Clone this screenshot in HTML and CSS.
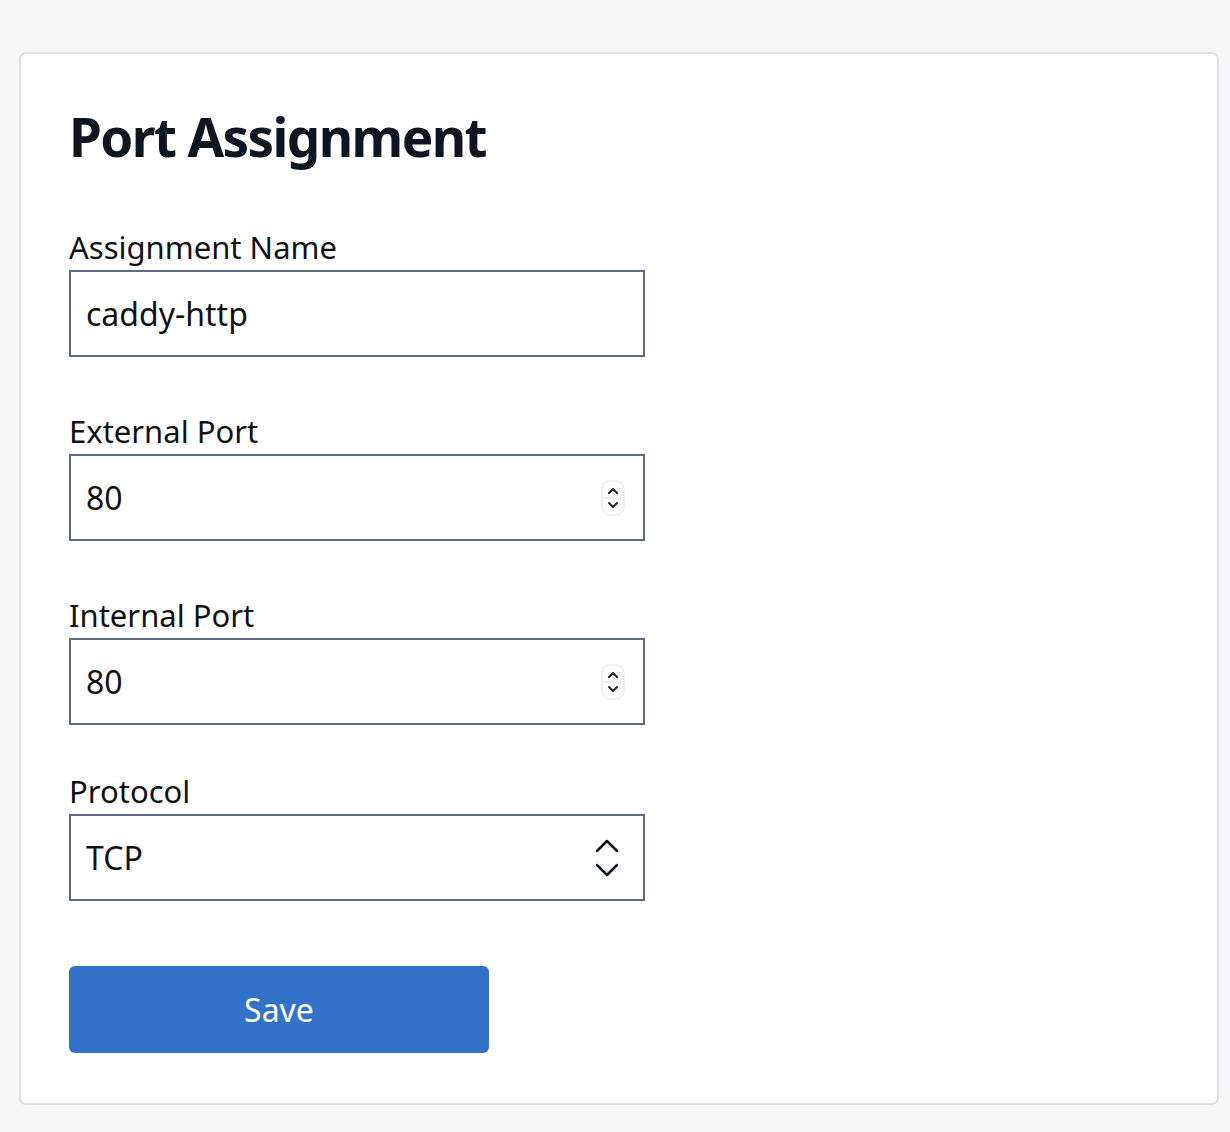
FILE: index.html
```html
<!DOCTYPE html>
<html lang="en">
<head>
  <meta charset="UTF-8">
  <meta name="viewport" content="width=device-width, initial-scale=1.0">
  <title>Port Assignment</title>
  <link rel="stylesheet" href="styles.css">
</head>
<body>
  <div class="card">
    <h1>Port Assignment</h1>
    <form id="portForm">
      <div class="field">
        <label for="assignName">Assignment Name</label>
        <div class="box">
          <input type="text" id="assignName" value="caddy-http">
        </div>
      </div>

      <div class="field">
        <label for="extPort">External Port</label>
        <div class="box">
          <input type="text" id="extPort" value="80" inputmode="numeric">
          <span class="spinner">
            <svg viewBox="0 0 24 36" width="24" height="36">
              <rect x="1" y="1" width="22" height="34" rx="8" fill="#fff" stroke="#e2e2e2"/>
              <line x1="1" y1="18" x2="23" y2="18" stroke="#e2e2e2"/>
              <path d="M8 13 L12 9 L16 13" fill="none" stroke="#222" stroke-width="2" stroke-linecap="round" stroke-linejoin="round"/>
              <path d="M8 23 L12 27 L16 23" fill="none" stroke="#222" stroke-width="2" stroke-linecap="round" stroke-linejoin="round"/>
            </svg>
          </span>
        </div>
      </div>

      <div class="field">
        <label for="intPort">Internal Port</label>
        <div class="box">
          <input type="text" id="intPort" value="80" inputmode="numeric">
          <span class="spinner">
            <svg viewBox="0 0 24 36" width="24" height="36">
              <rect x="1" y="1" width="22" height="34" rx="8" fill="#fff" stroke="#e2e2e2"/>
              <line x1="1" y1="18" x2="23" y2="18" stroke="#e2e2e2"/>
              <path d="M8 13 L12 9 L16 13" fill="none" stroke="#222" stroke-width="2" stroke-linecap="round" stroke-linejoin="round"/>
              <path d="M8 23 L12 27 L16 23" fill="none" stroke="#222" stroke-width="2" stroke-linecap="round" stroke-linejoin="round"/>
            </svg>
          </span>
        </div>
      </div>

      <div class="field field-select">
        <label for="protocol">Protocol</label>
        <div class="box">
          <span class="select-value" id="protocol">TCP</span>
          <span class="chevrons">
            <svg viewBox="0 0 24 40" width="24" height="40">
              <path d="M2 13 L12 3 L22 13" fill="none" stroke="#0d1520" stroke-width="2.5" stroke-linecap="round" stroke-linejoin="round"/>
              <path d="M2 27 L12 37 L22 27" fill="none" stroke="#0d1520" stroke-width="2.5" stroke-linecap="round" stroke-linejoin="round"/>
            </svg>
          </span>
        </div>
      </div>

      <button type="button" class="save">Save</button>
    </form>
  </div>
</body>
</html>
```

FILE: styles.css
```css
body { margin: 0; padding: 52px 11px 28px 19px; background: #f7f7f7; font-family: "Noto Sans", sans-serif; color: #111; }
.card { background: #fff; border: 2px solid #dfe1e8; border-radius: 7px; padding: 48px 48px 50px; }
h1 { margin: 0 0 55px; font-size: 53px; font-weight: 700; letter-spacing: -1.6px; color: #0b1620; line-height: 70px; }
.field { margin-bottom: 54px; }
.field label { display: block; font-size: 31px; line-height: 40px; margin-bottom: 3px; }
.box { display: flex; align-items: center; box-sizing: border-box; width: 576px; height: 87px; border: 2px solid #5b6b84; padding: 0 18px 0 15px; }
.box input { flex: 1; border: none; outline: none; font-family: inherit; font-size: 32px; color: #111; padding: 0; background: transparent; }
.spinner { display: flex; }
.field-select { margin-top: -8px; margin-bottom: 0; }
.select-value { flex: 1; font-size: 32px; }
.chevrons { display: flex; margin-right: 6px; }
.save { display: block; width: 420px; height: 87px; margin-top: 65px; border: none; border-radius: 6px; background: #3272c9; color: #fff; font-family: inherit; font-size: 32px; cursor: pointer; }
```
